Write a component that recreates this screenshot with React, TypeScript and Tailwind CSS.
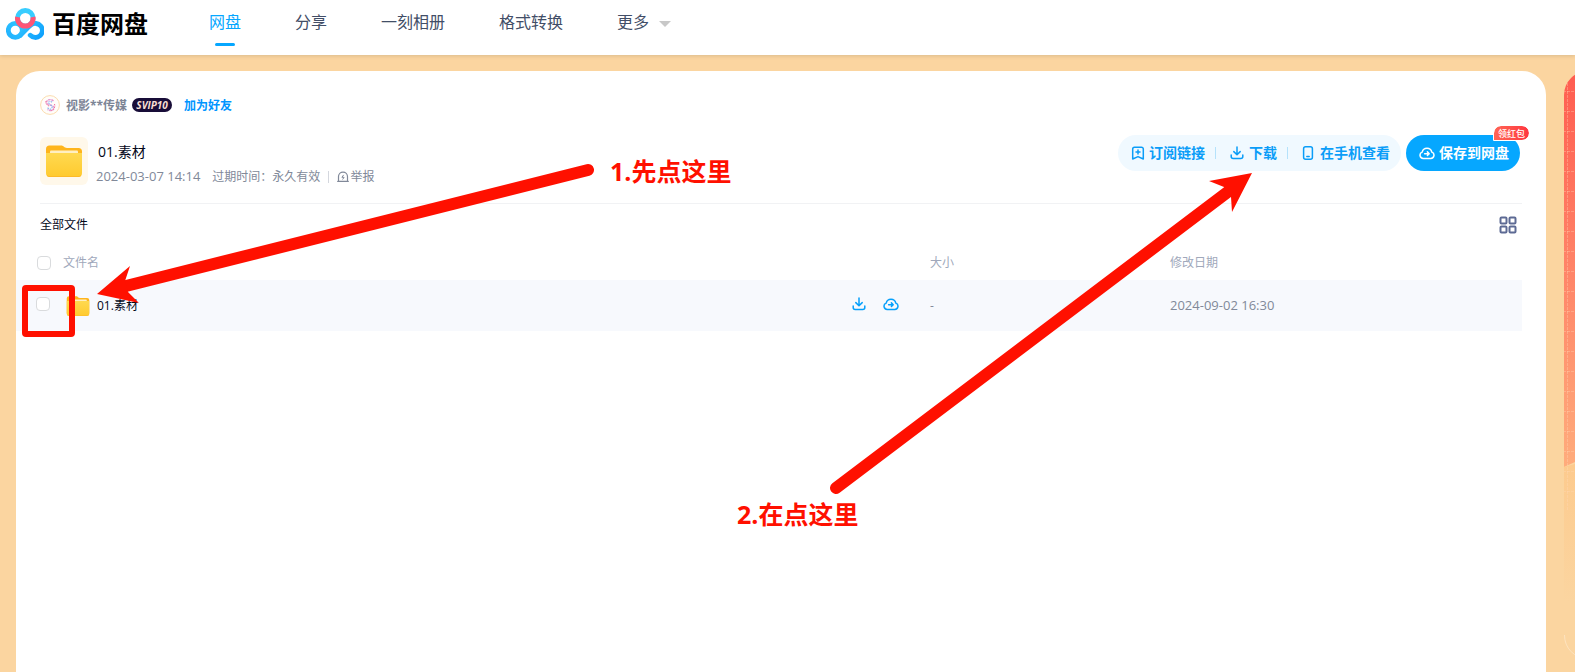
import React from 'react';

interface IconProps {
  className?: string;
}

const navItems = ['网盘', '分享', '一刻相册', '格式转换'];

const files = [{ name: '01.素材', size: '-', date: '2024-09-02 16:30' }];

function Logo() {
  return (
    <svg className="h-8 w-[38px]" viewBox="0 0 38 32" fill="none" aria-hidden="true">
      <defs>
        <linearGradient id="logo-left" x1="0" y1="32" x2="24" y2="6" gradientUnits="userSpaceOnUse">
          <stop stopColor="#1fb0ff" />
          <stop offset="1" stopColor="#38d0ff" />
        </linearGradient>
        <linearGradient id="logo-right" x1="16" y1="10" x2="38" y2="30" gradientUnits="userSpaceOnUse">
          <stop stopColor="#35c8ff" />
          <stop offset="1" stopColor="#0a9dfd" />
        </linearGradient>
      </defs>
      <circle cx="9.3" cy="22.3" r="7" stroke="url(#logo-left)" strokeWidth="4.8" />
      <path d="M14.3 27.3 22 19.500 25 17A7 7 0 1 1 24.200 27.200" stroke="url(#logo-right)" strokeWidth="4.8" strokeLinecap="round" />
      <circle cx="19.3" cy="10.3" r="7.8" stroke="#38cdff" strokeWidth="4.8" />
      <path d="M11.600 9A7.800 7.800 0 1 0 27 9" stroke="#ff5576" strokeWidth="5" />
    </svg>
  );
}

function FolderIcon({ className }: IconProps) {
  return (
    <svg className={className} viewBox="0 0 36 32" fill="none" aria-hidden="true">
      <defs>
        <linearGradient id="folder-front" x1="0" y1="8" x2="0" y2="32" gradientUnits="userSpaceOnUse">
          <stop stopColor="#ffd950" />
          <stop offset="1" stopColor="#ffca2e" />
        </linearGradient>
      </defs>
      <path d="M0 4a3.500 3.500 0 0 1 3.500-3.500H15c1.500 0 2.300.6 3 1.300S19.500 3 21 3h11.500A3.500 3.500 0 0 1 36 6.500V28H0z" fill="#ffb51c" />
      <rect x="4" y="5.500" width="28" height="6" rx="1" fill="#ffefc2" />
      <path d="M0 8h36v20a4 4 0 0 1-4 4H4a4 4 0 0 1-4-4z" fill="url(#folder-front)" />
      <path d="M1 30.500Q2 31.600 4 31.600H32Q34 31.600 35 30.500" stroke="#fdb928" />
    </svg>
  );
}

function DownloadIcon({ className }: IconProps) {
  return (
    <svg className={className} viewBox="0 0 14 14" fill="none" stroke="currentColor" strokeWidth="1.500" strokeLinecap="round" strokeLinejoin="round" aria-hidden="true">
      <path d="M7 1v7.500M3.800 5.600 7 8.800l3.200-3.200M1.200 9v1.500a2 2 0 0 0 2 2h7.600a2 2 0 0 0 2-2V9" />
    </svg>
  );
}

function CloudIcon({ className }: IconProps) {
  return (
    <svg className={className} viewBox="0 0 16 14" fill="none" stroke="currentColor" strokeWidth="1.500" strokeLinecap="round" strokeLinejoin="round" aria-hidden="true">
      <path d="M4.200 12.500a3.300 3.300 0 0 1-1-6.400 4.900 4.900 0 0 1 9.600 0 3.300 3.300 0 0 1-1 6.400z" />
      <path d="M5.600 7.700h4.400M8.400 5.900l1.800 1.800-1.800 1.800" />
    </svg>
  );
}

function SubscribeIcon() {
  return (
    <svg className="h-3.5 w-3.5" viewBox="0 0 14 14" fill="none" stroke="currentColor" strokeWidth="1.500" strokeLinecap="round" strokeLinejoin="round" aria-hidden="true">
      <path d="M1.700 13V3a1.800 1.800 0 0 1 1.800-1.800h7A1.800 1.800 0 0 1 12.300 3v10L7 10.600z" />
      <path d="M7 4v4M5 6h4" />
    </svg>
  );
}

function PhoneIcon() {
  return (
    <svg className="h-3.5 w-3" viewBox="0 0 12 14" fill="none" stroke="currentColor" strokeWidth="1.500" strokeLinecap="round" aria-hidden="true">
      <rect x="1.600" y="0.800" width="8.800" height="12.400" rx="2" />
      <path d="M4.800 10.600h2.400" />
    </svg>
  );
}

function ReportIcon() {
  return (
    <svg className="h-3 w-3" viewBox="0 0 12 12" fill="none" stroke="currentColor" strokeWidth="1.200" strokeLinecap="round" strokeLinejoin="round" aria-hidden="true">
      <path d="M1.500 10.200V5.600a4.500 4.500 0 0 1 9 0v4.600M0.700 10.400h10.600" />
      <path d="M6.400 4.200 4.900 6.300h2.200L5.800 8.200" strokeWidth="1" />
    </svg>
  );
}

function GridIcon() {
  return (
    <svg className="h-[18px] w-[18px]" viewBox="0 0 18 18" fill="none" stroke="#5d6a94" strokeWidth="2" aria-hidden="true">
      <rect x="1.500" y="1.500" width="6" height="6" rx="1" />
      <rect x="10.500" y="1.500" width="6" height="6" rx="1" />
      <rect x="1.500" y="10.500" width="6" height="6" rx="1" />
      <rect x="10.500" y="10.500" width="6" height="6" rx="1" />
    </svg>
  );
}

function Avatar() {
  return (
    <svg className="h-5 w-5" viewBox="0 0 20 20" fill="none" aria-hidden="true">
      <circle cx="10" cy="10" r="9.400" fill="#fffdfa" stroke="#fbdcae" />
      <path d="M13.500 6C11 3.500 6.500 4.500 6.500 7.500s7 2 7.500 5-4 4-6.500 2" stroke="#e79ad0" strokeWidth="1.400" strokeDasharray="2.500 0.700" />
      <path d="M12 7.200c-2-1.500-4-.5-3.500 1s4.500 2 3.500 4.500-3 1.500-4.500 0" stroke="#8db3ee" strokeWidth="1.200" strokeDasharray="1.500 1" />
      <path d="M6 6c-.8 3 1.500 4.500 4 5.500M14.500 9c1 3-.5 6-3.500 6.500" stroke="#f2709e" strokeDasharray="1.500 1" />
    </svg>
  );
}

function Checkbox({ label }: { label: string }) {
  return (
    <input
      type="checkbox"
      aria-label={label}
      className="h-3.5 w-3.5 shrink-0 appearance-none rounded border border-[#d9dbdd] bg-white checked:border-[#06a7ff] checked:bg-[#06a7ff]"
    />
  );
}

function Header() {
  return (
    <header className="relative z-10 flex h-[55px] shrink-0 items-start bg-white shadow-[0_1px_4px_rgba(90,80,60,0.2)]">
      <a href="#" className="flex h-12 w-[209px] items-center gap-2 pl-1.5 text-2xl font-bold text-black">
        <Logo />
        <span>百度网盘</span>
      </a>
      <nav className="flex gap-[54px] text-base text-[#424e67]">
        {navItems.map((item, index) => (
          <a
            key={item}
            href="#"
            className={
              index === 0
                ? 'flex h-[46px] flex-col items-center justify-between pt-2.5 text-[#06a7ff]'
                : 'flex h-[46px] flex-col items-center pt-2.5'
            }
          >
            <span className="leading-6">{item}</span>
            {index === 0 && <span className="h-[3px] w-5 rounded-full bg-[#06a7ff]"></span>}
          </a>
        ))}
        <button type="button" className="flex h-11 items-center gap-2.5">
          <span className="leading-6">更多</span>
          <svg className="mt-1 h-1.5 w-3" viewBox="0 0 12 6" aria-hidden="true">
            <path d="M0 0h12L6 6z" fill="#c8c8c8" />
          </svg>
        </button>
      </nav>
    </header>
  );
}

function ShareInfo() {
  return (
    <section>
      <div className="flex h-5 items-center text-xs leading-5">
        <Avatar />
        <span className="ml-1.5 pt-0.5 font-bold text-[#7d8596]">视影**传媒</span>
        <span className="ml-[5px] flex h-3.5 w-10 items-center justify-center rounded-full bg-[#180d38] text-[10px] font-bold italic leading-none text-[#f9dfd3]">
          SVIP10
        </span>
        <a href="#" className="ml-3 pt-0.5 font-bold text-[#0095ff]">加为好友</a>
      </div>

      <div className="mt-[22px] flex items-start justify-between">
        <div className="flex items-start gap-2">
          <div className="flex h-12 w-12 items-center justify-center rounded-md bg-[#fff8ea]">
            <FolderIcon className="h-8 w-9" />
          </div>
          <div className="pt-[3px] text-[#818999]">
            <h1 className="pl-0.5 text-sm leading-6 text-[#03081a]">01.素材</h1>
            <div className="flex h-6 items-center pt-px text-xs">
              <span className="text-[13px]">2024-03-07 14:14</span>
              <span className="ml-3">过期时间：永久有效</span>
              <span className="mx-2 h-3 w-px bg-[#d4d7de]"></span>
              <button type="button" className="flex items-center gap-px">
                <ReportIcon />
                举报
              </button>
            </div>
          </div>
        </div>

        <div className="-mt-0.5 mr-0.5 flex gap-[5px] text-sm">
          <div className="flex h-9 items-center rounded-full bg-[#f0f9ff] pl-3 pr-[11px] font-bold text-[#0a9df8]">
            <button type="button" className="flex items-center gap-1 pl-px">
              <SubscribeIcon />
              订阅链接
            </button>
            <span className="ml-2.5 mr-3.5 h-3 w-px bg-[#b5e2fb]"></span>
            <button type="button" className="flex items-center gap-[5px]">
              <DownloadIcon className="h-3.5 w-3.5" />
              下载
            </button>
            <span className="ml-2.5 mr-3.5 h-3 w-px bg-[#b5e2fb]"></span>
            <button type="button" className="flex items-center gap-1.5">
              <PhoneIcon />
              在手机查看
            </button>
          </div>
          <button type="button" className="relative flex h-9 w-[114px] items-center justify-center gap-1 rounded-full bg-[#06a7ff] pl-0.5 font-bold text-white">
            <CloudIcon className="h-3.5 w-4" />
            保存到网盘
            <span className="absolute -right-[9px] -top-[9px] flex h-3.5 w-[35px] items-center justify-center rounded-t-full rounded-br-full bg-linear-to-r from-[#ff6455] to-[#ff343f] text-[9px] font-medium leading-none outline outline-white">
              领红包
            </span>
          </button>
        </div>
      </div>
    </section>
  );
}

function FileTable() {
  return (
    <table className="w-full table-fixed text-left text-xs">
      <colgroup>
        <col />
        <col className="w-[240px]" />
        <col className="w-[352px]" />
      </colgroup>
      <thead>
        <tr className="h-9 text-[#a0a8bb]">
          <th className="pl-[21px] pt-0.5 font-normal">
            <div className="flex items-center gap-3">
              <Checkbox label="全选" />
              文件名
            </div>
          </th>
          <th className="pt-0.5 font-normal">大小</th>
          <th className="pt-0.5 font-normal">修改日期</th>
        </tr>
      </thead>
      <tbody>
        {files.map((file) => (
          <tr key={file.name} className="h-[51px] bg-[#f7f9fd] text-[#818999]">
            <td className="pl-5 pr-[31px]">
              <div className="flex items-center">
                <div className="flex pb-1">
                  <Checkbox label={file.name} />
                </div>
                <FolderIcon className="ml-4 h-5 w-6" />
                <a href="#" className="ml-[7px] text-[#03081a]">{file.name}</a>
                <div className="ml-auto flex gap-[17px] pb-1 text-[#06a0fb]">
                  <button type="button" aria-label="下载">
                    <DownloadIcon className="h-3.5 w-3.5" />
                  </button>
                  <button type="button" aria-label="保存到网盘">
                    <CloudIcon className="h-3.5 w-4" />
                  </button>
                </div>
              </div>
            </td>
            <td>{file.size}</td>
            <td className="text-[13px]">{file.date}</td>
          </tr>
        ))}
      </tbody>
    </table>
  );
}

// Promo panel, only its left edge shows beside the card
function PromoPanel() {
  return (
    <aside className="w-[11px] shrink-0 overflow-hidden">
      <svg className="h-[588px] w-[280px] max-w-none" viewBox="0 0 280 588" fill="none" aria-hidden="true">
        <defs>
          <linearGradient id="promo-red" x1="0" y1="0" x2="0" y2="1">
            <stop stopColor="#ff5c50" />
            <stop offset="0.5" stopColor="#ff8468" />
            <stop offset="1" stopColor="#ffac7c" />
          </linearGradient>
          <linearGradient id="promo-sand" x1="0" y1="0" x2="0" y2="1">
            <stop stopColor="#fdca8d" />
            <stop offset="1" stopColor="#fbd5a0" />
          </linearGradient>
          <pattern id="promo-grid" x="3" y="0" width="20" height="20" patternUnits="userSpaceOnUse">
            <path d="M0.500 0V20M0 0.500H20" stroke="#ffd9b8" strokeOpacity="0.350" strokeDasharray="3 1" />
          </pattern>
        </defs>
        <path d="M0 24A24 24 0 0 1 24 0H280V380H40Q16 388 0 396z" fill="url(#promo-red)" />
        <path d="M0 396Q16 391 40 388H280V530H0z" fill="url(#promo-sand)" />
        <path d="M0 24A24 24 0 0 1 24 0H280V440H0z" fill="url(#promo-grid)" />
        <path d="M0.500 564A23 23 0 0 0 24 587.500" stroke="#fde3bf" />
      </svg>
    </aside>
  );
}

// Red marks over the page: which box to tick, then which button to press
function Guide() {
  return (
    <div className="pointer-events-none absolute left-0 top-0 z-20 text-[25px] font-bold leading-9 text-[#ff1000]">
      <svg className="h-[520px] w-[1270px] max-w-none" viewBox="0 0 1270 520" fill="none" aria-hidden="true">
        <path d="M588 170 122 287" stroke="currentColor" strokeWidth="12" strokeLinecap="round" />
        <path d="M97 294 130 266 125 281 128 292 139 303z" fill="currentColor" />
        <path d="M836 488 1229 191" stroke="currentColor" strokeWidth="12" strokeLinecap="round" />
        <path d="M1252 173 1209 181 1224 187 1231 197 1232 212z" fill="currentColor" />
        <rect x="25" y="288" width="47" height="46" rx="1" stroke="currentColor" strokeWidth="6" strokeLinejoin="round" />
      </svg>
      <p className="absolute left-[610px] top-[153px] whitespace-nowrap">1.先点这里</p>
      <p className="absolute left-[737px] top-[496px] whitespace-nowrap">2.在点这里</p>
    </div>
  );
}

export default function App() {
  return (
    <div className="relative flex min-h-screen flex-col overflow-hidden bg-[#fbd5a0] font-['Open_Sans','Noto_Sans_CJK_SC',sans-serif]">
      <Header />
      <div className="flex flex-1 gap-[18px] pl-4 pt-4">
        <main className="min-w-0 flex-1 rounded-t-[24px] bg-white pr-6 pt-6">
          <div className="pl-6">
            <ShareInfo />
            <div className="mt-[15px] flex h-[41px] items-center justify-between border-t border-[#f1f2f4] pr-[5px] pt-px">
              <span className="text-xs text-[#03081a]">全部文件</span>
              <button type="button" aria-label="切换视图">
                <GridIcon />
              </button>
            </div>
          </div>
          <FileTable />
        </main>
        <PromoPanel />
      </div>
      <Guide />
    </div>
  );
}
